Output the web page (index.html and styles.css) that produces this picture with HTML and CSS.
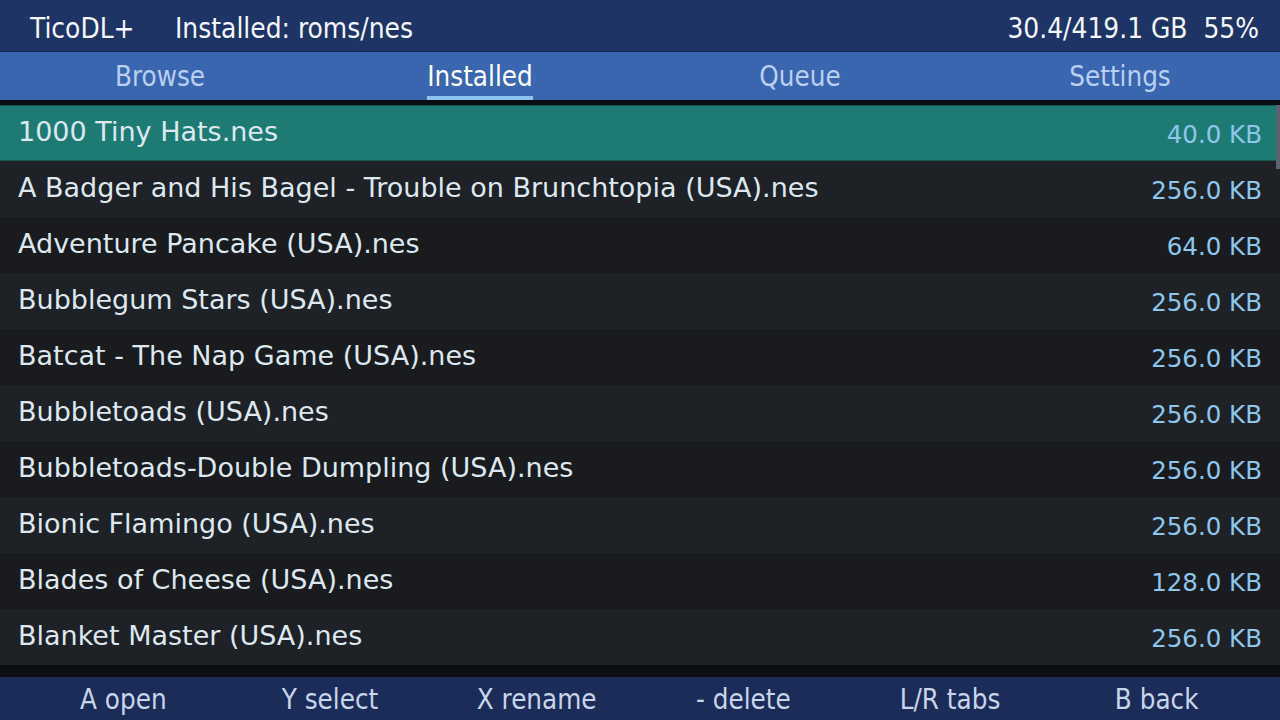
FILE: index.html
```html
<!DOCTYPE html>
<html lang="en">
<head>
    <meta charset="UTF-8">
    <title>TicoDL+</title>
    <link rel="stylesheet" href="styles.css">
</head>
<body>
    <header class="topbar">
        <div class="title">TicoDL+</div>
        <div class="path">Installed: roms/nes</div>
        <div class="storage">30.4/419.1 GB&nbsp;&nbsp;55%</div>
    </header>

    <nav class="tabs">
        <div class="tab"><span>Browse</span></div>
        <div class="tab active"><span>Installed</span></div>
        <div class="tab"><span>Queue</span></div>
        <div class="tab"><span>Settings</span></div>
    </nav>

    <main class="list">
        <div class="row selected"><span class="name">1000 Tiny Hats.nes</span><span class="size">40.0 KB</span></div>
        <div class="row"><span class="name">A Badger and His Bagel - Trouble on Brunchtopia (USA).nes</span><span class="size">256.0 KB</span></div>
        <div class="row"><span class="name">Adventure Pancake (USA).nes</span><span class="size">64.0 KB</span></div>
        <div class="row"><span class="name">Bubblegum Stars (USA).nes</span><span class="size">256.0 KB</span></div>
        <div class="row"><span class="name">Batcat - The Nap Game (USA).nes</span><span class="size">256.0 KB</span></div>
        <div class="row"><span class="name">Bubbletoads (USA).nes</span><span class="size">256.0 KB</span></div>
        <div class="row"><span class="name">Bubbletoads-Double Dumpling (USA).nes</span><span class="size">256.0 KB</span></div>
        <div class="row"><span class="name">Bionic Flamingo (USA).nes</span><span class="size">256.0 KB</span></div>
        <div class="row"><span class="name">Blades of Cheese (USA).nes</span><span class="size">128.0 KB</span></div>
        <div class="row"><span class="name">Blanket Master (USA).nes</span><span class="size">256.0 KB</span></div>
        <div class="scrollbar"></div>
    </main>

    <footer class="hints">
        <div>A open</div>
        <div>Y select</div>
        <div>X rename</div>
        <div>- delete</div>
        <div>L/R tabs</div>
        <div>B back</div>
    </footer>
</body>
</html>
```

FILE: styles.css
```css
html, body {
    margin: 0;
    padding: 0;
    width: 1280px;
    height: 720px;
    overflow: hidden;
    background-color: #0d0e11;
}

.topbar, .tabs, .hints {
    font-family: "Liberation Sans Narrow", "DejaVu Sans Condensed", sans-serif;
}

.topbar {
    height: 52px;
    box-sizing: border-box;
    border-bottom: 1px solid #17294f;
    background-color: #1e3464;
    color: #f4f7fb;
    display: flex;
    align-items: center;
    padding: 5px 21px 0 30px;
    font-size: 27.8px;
}

.title {
    width: 145px;
}

.storage {
    margin-left: auto;
}

.tabs {
    height: 48px;
    background-color: #3a66b0;
    display: grid;
    grid-template-columns: repeat(4, 1fr);
    border-bottom: 5px solid #0b0d14;
}

.tab {
    display: flex;
    justify-content: center;
    font-size: 27.5px;
    color: #b9d0ef;
}

.tab span {
    padding-top: 8px;
    height: 38px;
    box-sizing: border-box;
}

.tab.active span {
    color: #ffffff;
    height: 100%;
    border-bottom: 4px solid #8ec3f2;
}

.list {
    position: relative;
    font-family: "DejaVu Sans", sans-serif;
    font-size: 27px;
}

.row {
    height: 56px;
    display: flex;
    align-items: center;
    justify-content: space-between;
    padding: 0 18px 0 18px;
    box-sizing: border-box;
    background-color: #191b1f;
    color: #dde8ef;
}

.row:nth-child(even) {
    background-color: #1e2126;
}

.row.selected {
    background-color: #1e7b74;
    border-top: 1px solid #18554f;
    border-bottom: 1px solid #18554f;
}

.name {
    padding-bottom: 4px;
}

.size {
    font-size: 24.5px;
    padding-top: 2px;
    color: #8ec6ec;
}

.scrollbar {
    position: absolute;
    top: 0;
    right: 0;
    width: 4px;
    height: 64px;
    background-color: #5c6270;
}

.hints {
    position: absolute;
    left: 0;
    bottom: 0;
    width: 100%;
    height: 43px;
    box-sizing: border-box;
    padding: 0 20px;
    background-color: #1c2c58;
    display: grid;
    grid-template-columns: repeat(6, 1fr);
    align-items: center;
    text-align: center;
    font-size: 27.5px;
    color: #c9d5ea;
}
```
